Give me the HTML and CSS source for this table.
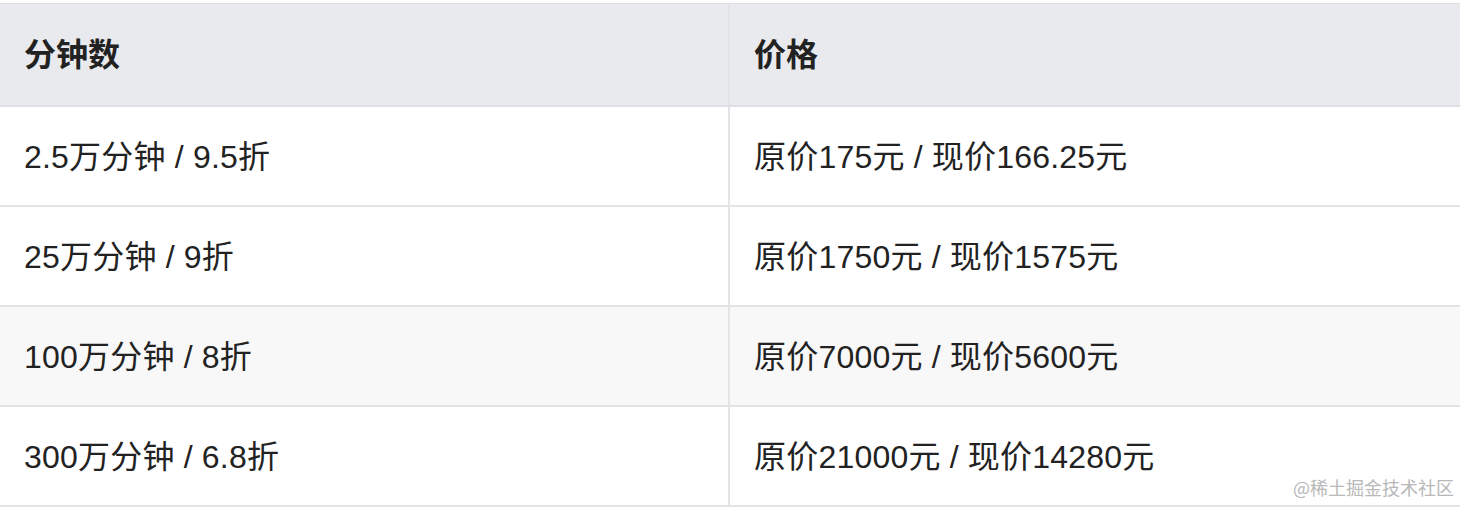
FILE: index.html
```html
<!DOCTYPE html>
<html lang="zh-CN">
<head>
<meta charset="utf-8">
<title>价格表</title>
<link rel="stylesheet" href="styles.css">
</head>
<body>
<div class="page">
  <table class="price-table">
    <thead>
      <tr><th class="col-a">分钟数</th><th class="col-b">价格</th></tr>
    </thead>
    <tbody>
      <tr><td>2.5万分钟 / 9.5折</td><td>原价175元 / 现价166.25元</td></tr>
      <tr><td>25万分钟 / 9折</td><td>原价1750元 / 现价1575元</td></tr>
      <tr class="shade"><td>100万分钟 / 8折</td><td>原价7000元 / 现价5600元</td></tr>
      <tr><td>300万分钟 / 6.8折</td><td>原价21000元 / 现价14280元</td></tr>
    </tbody>
  </table>
  <div class="watermark">@稀土掘金技术社区</div>
</div>
</body>
</html>
```
FILE: styles.css
```css
html, body {
  margin: 0;
  padding: 0;
  background: #ffffff;
}
.page {
  position: relative;
  width: 1460px;
  height: 508px;
  padding-top: 3px;
  box-sizing: border-box;
  font-family: "Liberation Sans", "Noto Sans CJK SC", sans-serif;
  color: #222222;
}
.price-table {
  width: 1460px;
  border-collapse: collapse;
  table-layout: fixed;
  border-top: 1px solid #dcdde0;
}
.col-a { width: 729px; }
.price-table th,
.price-table td {
  text-align: left;
  padding: 0 0 4px 24px;
  font-size: 32px;
  box-sizing: border-box;
}
.price-table th {
  height: 102px;
  background: #e9eaed;
  font-weight: bold;
  border-bottom: 2px solid #dedfe2;
}
.price-table th + th,
.price-table td + td {
  border-left: 2px solid #e3e4e6;
}
.price-table td {
  height: 100px;
  font-weight: normal;
  letter-spacing: 0.2px;
  border-bottom: 2px solid #e3e4e6;
}
.price-table tr.shade td {
  background: #f8f8f8;
}
.watermark {
  position: absolute;
  right: 6px;
  bottom: 8px;
  font-family: "Noto Sans CJK SC", sans-serif;
  font-size: 18px;
  color: #b8b8b8;
}
```
